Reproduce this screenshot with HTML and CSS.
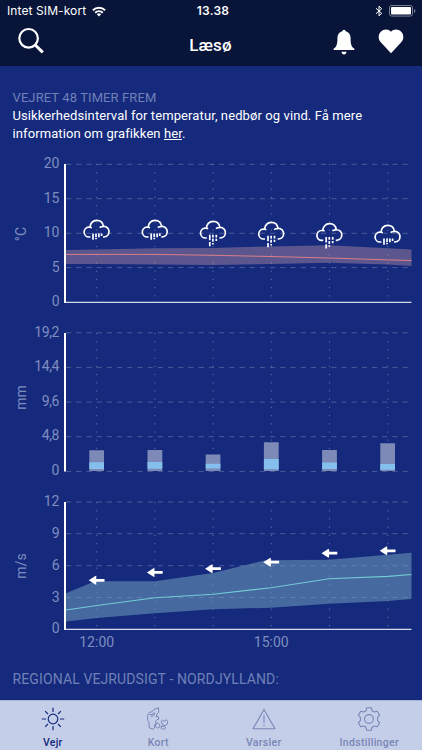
FILE: index.html
```html
<!DOCTYPE html>
<html lang="da">
<head>
<meta charset="utf-8">
<meta name="viewport" content="width=device-width, initial-scale=1">
<title>Læsø</title>
<link rel="stylesheet" href="styles.css">
</head>
<body>
<div class="app">
  <header class="header">
    <div class="status">
      <div class="carrier"><span>Intet SIM-kort</span>
        <svg width="14" height="11" viewBox="0 0 14 11" fill="none" stroke="#fff" stroke-width="2"><path d="M.9 4.2a8.8 8.8 0 0 1 12.2 0M3.2 6.7a5.5 5.5 0 0 1 7.6 0"/><path d="M7 10.5 4.8 8.3a3.2 3.2 0 0 1 4.4 0z" fill="#fff" stroke="none"/></svg>
      </div>
      <time class="clock">13.38</time>
      <div class="power">
        <svg width="8" height="12" viewBox="0 0 8 12" fill="none" stroke="#fff" stroke-width="1"><path d="m1 3.3 5.7 5L4 10.8V1.2l2.7 2.5L1 8.7"/></svg>
        <svg width="27" height="12" viewBox="0 0 27 12"><rect x=".5" y=".5" width="23" height="10.6" rx="2.3" fill="none" stroke="#7b8194"/><rect x="2" y="2" width="20" height="7.6" rx="1" fill="#fff"/><path d="M25 4v4q1.4-.6 1.4-2T25 4" fill="#7b8194"/></svg>
      </div>
    </div>
    <div class="nav">
      <svg class="search" width="28" height="28" viewBox="0 0 28 28" fill="none" stroke="#fff"><circle cx="11.6" cy="11.3" r="9.3" stroke-width="2.2"/><path d="m18.2 18 7.6 7.4" stroke-width="3"/></svg>
      <h1>Læsø</h1>
      <div class="actions">
        <svg width="22" height="27" viewBox="0 0 22 27" fill="#fff"><path d="M11 .7q1.500 0 1.800 1.600c3.200.8 4.800 3.500 4.800 7 0 6.200.8 8.600 3.800 10.500V21H.6v-1.200c3-1.900 3.800-4.300 3.800-10.500 0-3.500 1.600-6.200 4.800-7Q9.500.7 11 .7M8.300 22.800h5.400Q13 25.600 11 25.600t-2.700-2.800"/></svg>
        <svg width="26" height="25" viewBox="0 0 26 25" fill="#fff"><path d="M13 2.800C15.500-.3 20.300-.3 23 2.500c3.100 3.200 3.100 7.700 0 11L13 24.200 3 13.500c-3.100-3.300-3.100-7.800 0-11C5.700-.3 10.500-.3 13 2.800"/></svg>
      </div>
    </div>
  </header>

  <main class="content">
    <h2 class="period">VEJRET 48 TIMER FREM</h2>
    <p>Usikkerhedsinterval for temperatur, nedbør og vind. Få mere<br>information om grafikken <a>her</a>.</p>

    <svg class="chart" width="422" height="168" viewBox="0 150 422 168">
      <defs>
        <g id="cloud" fill="none" stroke="#fff" stroke-width="1.700">
          <path d="M-6.300 8.300h-1.200a4.900 4.900 0 0 1-.4-9.800h1.300C-6.700-5.200-3.900-8.300 0-8.300c3.800 0 6.300 2.500 6.700 6.100 3.300-.3 5.600 2 5.600 5 0 3.200-2.200 5.500-5.200 5.500H6.300M2.900-1.100q1.500-1.200 3.800-1.100M-6.600-1.500l1.700.5"/>
        </g>
        <path id="showers" d="M-3.700 5.500v6.300M-.7 5.500v3.500M-.7 9.800v1.500M2.200 5.500v3.700M4.900 5.500v2.500" stroke="#fff" stroke-width="1.700"/>
        <path id="rain" d="M-3.300 5v5.600M-.2 5v2.700M-.2 9v3M3.200 5v2.700M3.200 9v2.300M-3.300 12.200v4.300M-.2 13.300v1.500" stroke="#fff" stroke-width="1.700"/>
      </defs>
      <path class="grid" d="M66 164.300H411.500M66 198.700H411.500M66 233.300H411.500M66 267.600H411.500"/>
      <path class="dots" d="M96.700 164V302M154.900 164V302M213.100 164V302M271.300 164V302M329.500 164V302M387.700 164V302"/>
      <path fill="#e5b0b4" fill-opacity=".34" d="M66 250 97 249.500 155 248.300 213 248 271 246.400 329 245.300 388 248.300 411.500 249.500V266L388 264.600 329 262.800 271 264 213 265 155 264.600 97 264H66z"/>
      <path fill="none" stroke="#db7d8b" d="M66 254.400H155L213 255.300 271 256.500 329 258 388 259.900 411.500 260.500"/>
      <path class="base" d="M64 302.300H411.500"/>
      <path class="axis" d="M65 164V303"/>
      <g transform="translate(96.700 228.700)"><use href="#cloud"/><use href="#showers" transform="translate(0 -.7)"/></g>
      <g transform="translate(154.900 228.700)"><use href="#cloud"/><use href="#showers" transform="translate(0 -.7)"/></g>
      <g transform="translate(213.100 229.700)"><use href="#cloud"/><use href="#rain"/></g>
      <g transform="translate(271.300 230.700)"><use href="#cloud"/><use href="#rain"/></g>
      <g transform="translate(329.500 232)"><use href="#cloud"/><use href="#rain"/></g>
      <g transform="translate(387.700 233.700)"><use href="#cloud"/><use href="#showers" transform="translate(0 -.7)"/></g>
      <g class="labels"><text x="59.500" y="168.300">20</text><text x="59.500" y="202.800">15</text><text x="59.500" y="237.300">10</text><text x="59.500" y="271.800">5</text><text x="59.500" y="306.300">0</text></g>
      <text class="unit" transform="translate(26 234) rotate(-90)">°C</text>
    </svg>

    <svg class="chart" width="422" height="168" viewBox="0 318 422 168">
      <path class="grid" d="M66 332.800H411.500M66 367.400H411.500M66 402.100H411.500M66 436.700H411.500M66 471.400H411.500"/>
      <path class="dots" d="M96.700 333V450M154.900 333V450M213.100 333V454M271.300 333V442M329.500 333V450M387.700 333V443"/>
      <path fill="#7d89b7" d="M89.300 450.300H104V471H89.300zM147.500 450H162.300V471H147.500zM205.700 454.600H220.400V471H205.700zM263.900 442.300H278.700V471H263.900zM322.100 450H336.900V471H322.100zM380.300 443.200H395V471H380.300z"/>
      <path fill="#84bfed" d="M89.300 462.300H104V469H89.300zM147.500 462H162.300V468.700H147.500zM205.700 463.700H220.400V468.500H205.700zM263.900 459H278.700V469.300H263.900zM322.100 462.500H336.900V469H322.100zM380.300 464H395V469.800H380.300z"/>
      <path class="axis" d="M65 333V471.500"/>
      <g class="labels decimals"><text x="59" y="336.500">19,2</text><text x="59" y="371">14,4</text><text x="59" y="405.700">9,6</text><text x="59" y="440.300">4,8</text><text x="59" y="475">0</text></g>
      <text class="unit" transform="translate(26 397.500) rotate(-90)">mm</text>
    </svg>

    <svg class="chart" width="422" height="176" viewBox="0 486 422 176">
      <path fill="#466a9f" d="M66 593.300 95 581.300H155L213 573 265 560.300 329 559.800 388 554.800 411.500 552.700V599L388 601 329 603.700 271 607.700 213 609.300 155 613.300 97 618 66 621.500z"/>
      <path class="grid" d="M66 502H411.500M66 533.700H411.500M66 565.700H411.500M66 597.500H411.500"/>
      <path class="dots" d="M96.700 502V629M154.900 502V629M213.100 502V629M271.300 502V629M329.500 502V629M387.700 502V629"/>
      <path fill="none" stroke="#73cbd4" stroke-width="1.100" d="M66 610 97 605.500 155 597.700 213 594.200 271 587.700 329 578.700 388 576.400 411.500 574.500"/>
      <path class="base" d="M64 629.300H411.500"/>
      <path class="axis" d="M65 502V630"/>
      <defs><path id="wind" fill="#fff" d="M-8 0-1-4.500Q-.2-4-.4-1.400H7.800V1.400H-.4Q-.2 4-1 4.500z"/></defs>
      <use href="#wind" x="96.700" y="580.300"/><use href="#wind" x="154.900" y="572.400"/><use href="#wind" x="213.100" y="568.700"/><use href="#wind" x="271.300" y="562.200"/><use href="#wind" x="329.500" y="553.200"/><use href="#wind" x="387.700" y="550.800"/>
      <g class="labels"><text x="59.500" y="505.700">12</text><text x="59.500" y="537.700">9</text><text x="59.500" y="569.700">6</text><text x="59.500" y="601.500">3</text><text x="59.500" y="633.300">0</text></g>
      <g class="hours"><text x="96.700" y="647.300">12:00</text><text x="271.300" y="647.300">15:00</text></g>
      <text class="unit" transform="translate(26 566) rotate(-90)">m/s</text>
    </svg>

    <h2 class="region">REGIONAL VEJRUDSIGT - NORDJYLLAND:</h2>
  </main>

  <nav class="tabs">
    <div class="tab active">
      <svg width="24" height="24" viewBox="0 0 24 24" fill="none" stroke="currentColor" stroke-width="1.200"><circle cx="12" cy="12" r="4.800"/><path d="M12 .8V5M12 19v4.200M.8 12H5M19 12h4.200M4.100 4.100l2.900 2.900M17 17l2.900 2.900M4.100 19.900 7 17M17 7l2.900-2.900"/></svg>
      <span>Vejr</span>
    </div>
    <div class="tab">
      <svg width="24" height="24" viewBox="0 0 24 24" fill="none" stroke="currentColor" stroke-width="1"><path d="M12.500.8 7.800 2.600 6.200 4.700 3.500 5.300 1.700 8v5.200l1.400 2v5.500L7 22.200l1.400-1 .1-3.400 1.800-1.600-.8-2.100 1.500-1.500 1.800-.5-.4-2.300-2.300-.3 1.200-2.800 1.400-1.300zM3.500 7.500l2.700.3 1.200-1.900 1.600.4-1.500 2.500-2.900.4M9.700 17l2-.9 2 1.400.2 2.400-2.300 1.200-2-1.500zM15 14.500l1.600-1.300 1.500 1.300 2.200-1.800 1.300 1.700-.4 2.900-2.200 1.400-2.300-.9zM15.500 19l3 .5 1.300 1.500-2.200 1.500-2.400-1z"/></svg>
      <span>Kort</span>
    </div>
    <div class="tab">
      <svg width="24" height="24" viewBox="0 0 24 24" fill="none" stroke="currentColor" stroke-width="1.100" stroke-linejoin="round"><path d="M12 2.500 23 21.800H1zM12 8.200v7.500M12 17.500v1.400"/></svg>
      <span>Varsler</span>
    </div>
    <div class="tab">
      <svg width="24" height="24" viewBox="0 0 24 24" fill="none" stroke="currentColor" stroke-width="1.100" stroke-linejoin="round"><circle cx="12" cy="12" r="4.400"/><path d="M9.700.8h4.600L15 3.700l2.300 1.300 3-.8 2.400 4-2.100 2.200v3.200l2.100 2.200-2.400 4-3-.8L15 20.300l-.7 2.900H9.700L9 20.300 6.700 19l-3 .8-2.400-4 2.100-2.200v-3.200L1.300 8.200l2.400-4 3 .8L9 3.700z"/></svg>
      <span>Indstillinger</span>
    </div>
  </nav>
</div>
</body>
</html>
```
FILE: styles.css
```css
* { box-sizing: border-box; }
body { margin: 0; background: #152a7c; font-family: Roboto, "Liberation Sans", sans-serif; }
.app { width: 422px; height: 750px; display: flex; flex-direction: column; overflow: hidden; }

.header { height: 66px; background: #081438; color: #fff; }
.status { height: 22px; padding: 0 6px 0 7px; display: grid; grid-template-columns: 1fr auto 1fr; align-items: center; font: 12px/22px Inter, sans-serif; }
.carrier { display: flex; align-items: center; gap: 6px; letter-spacing: .1px; }
.clock { padding-left: 3px; font-weight: 600; letter-spacing: .2px; }
.power { display: flex; justify-content: flex-end; align-items: center; gap: 6px; }
.nav { height: 44px; padding: 5px 18px 0 17px; display: grid; grid-template-columns: 1fr auto 1fr; align-items: start; }
h1 { margin: 0; font-size: 17px; line-height: 36px; font-weight: 500; letter-spacing: .2px; }
.actions { display: flex; justify-content: flex-end; gap: 23px; padding: 2px 0 0; }

.content { flex: 1; min-height: 0; overflow: hidden; padding-top: 23px; }
h2 { margin: 0 12.5px; font-size: 14px; line-height: 18px; font-weight: 400; color: #7080b8; white-space: nowrap; }
.period { font-size: 13px; letter-spacing: .1px; }
p { margin: 0 12.5px; height: 43px; color: #fff; font-size: 13px; line-height: 18px; letter-spacing: .1px; white-space: nowrap; }
a { text-decoration: underline; }
.chart { display: block; }
.grid { stroke: #8592bc; stroke-opacity: .6; stroke-width: .8; stroke-dasharray: 5.2 5; fill: none; }
.dots { stroke: #8592bc; stroke-opacity: .65; stroke-width: 1; stroke-dasharray: 1.2 7; fill: none; }
.axis { stroke: #fff; stroke-width: 2; }
.base { stroke: #d5dbed; stroke-width: 1.2; }
.labels, .hours, .unit { fill: #7f8dc0; font-size: 14px; }
.labels { text-anchor: end; }
.decimals { letter-spacing: -.4px; }
.hours, .unit { text-anchor: middle; }
.region { margin-top: 8px; letter-spacing: .12px; }

.tabs { height: 50px; display: grid; grid-template-columns: repeat(4, 1fr); background: #c5cee9; border-top: 1px solid #aab4d6; }
.tab { display: flex; flex-direction: column; align-items: center; padding-top: 6px; color: #7886b6; font-size: 10.5px; line-height: 12px; letter-spacing: .3px; font-weight: 500; }
.tab span { margin-top: 6px; }
.active { color: #152a7c; }
```
